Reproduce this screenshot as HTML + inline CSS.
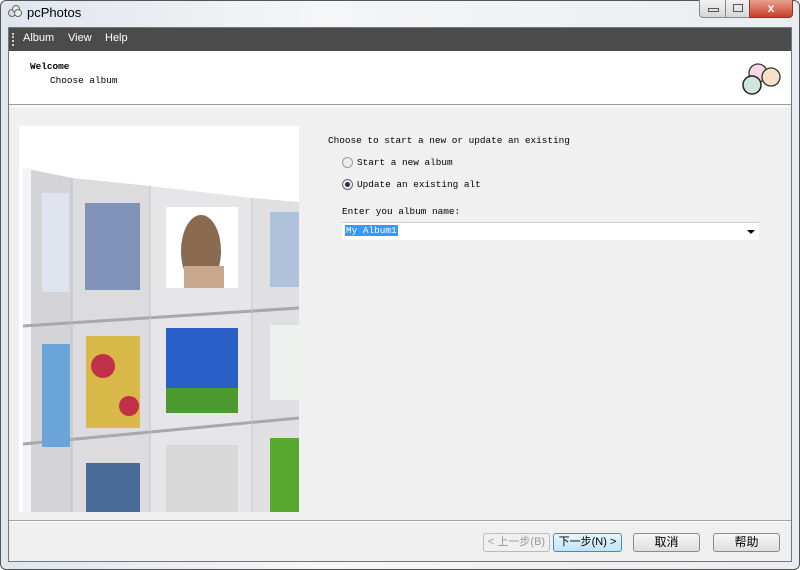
<!DOCTYPE html>
<html><head><meta charset="utf-8"><style>
*{margin:0;padding:0;box-sizing:border-box}
html,body{width:800px;height:570px;overflow:hidden}
body{background:#fff;font-family:"Liberation Sans","Noto Sans CJK SC",sans-serif;position:relative}
.a{position:absolute}
.mono{font-family:"Liberation Mono","Noto Sans CJK SC",monospace;font-size:9.4px;color:#000;white-space:nowrap}
.btn{position:absolute;top:533px;height:19px;border:1px solid #8a8a8a;border-radius:3px;background:linear-gradient(#f6f6f6,#dedede);font-size:12px;text-align:center;line-height:17px;font-family:"Liberation Sans","Noto Sans CJK SC",sans-serif}
</style></head><body>
<div class="a" style="left:0;top:0;width:800px;height:570px;border:1px solid #555;border-radius:6px;background:linear-gradient(90deg,#dfe6ee,#f4f6f8 40%,#e9edf1)"></div>
<div class="a" style="left:8px;top:4px;width:14px;height:14px"><svg width="14" height="14"><circle cx="4" cy="9" r="3.5" fill="#ddd" stroke="#666"/><circle cx="8" cy="5" r="3.5" fill="#eee" stroke="#666"/><circle cx="10" cy="9" r="3.5" fill="#eee" stroke="#666"/></svg></div>
<div class="a" style="left:27px;top:5px;font-size:13px;color:#000">pcPhotos</div>
<div class="a" style="left:699px;top:0;width:27px;height:18px;border:1px solid #888;border-top:0;border-radius:0 0 0 4px;background:linear-gradient(#f2f2f2,#d6d6d6)"><div class="a" style="left:8px;top:8px;width:11px;height:4px;border:1px solid #555"></div></div>
<div class="a" style="left:725px;top:0;width:25px;height:18px;border:1px solid #888;border-top:0;background:linear-gradient(#f2f2f2,#d6d6d6)"><div class="a" style="left:7px;top:4px;width:10px;height:8px;border:1px solid #555"></div></div>
<div class="a" style="left:749px;top:0;width:44px;height:18px;border:1px solid #8a3a2a;border-top:0;border-radius:0 0 4px 0;background:linear-gradient(#e8a090,#c8402a);color:#fff;font-weight:bold;font-size:12px;text-align:center;line-height:16px">x</div>
<div class="a" style="left:8px;top:27px;width:784px;height:535px;background:#f0f0f0;border:1px solid #777"></div>
<div class="a" style="left:9px;top:28px;width:782px;height:23px;background:#4b4b4b"></div>
<div class="a" style="left:12px;top:33px;width:2px;height:13px;border-left:2px dotted #ccc"></div>
<div class="a" style="left:23px;top:32px;font-size:11px;color:#fff">Album</div>
<div class="a" style="left:68px;top:32px;font-size:11px;color:#fff">View</div>
<div class="a" style="left:105px;top:32px;font-size:11px;color:#fff">Help</div>
<div class="a" style="left:9px;top:51px;width:782px;height:54px;background:#fff;border-bottom:1px solid #a0a0a0"></div>
<div class="a mono" style="left:30px;top:61px;font-weight:bold">Welcome</div>
<div class="a mono" style="left:50px;top:75px">Choose album</div>
<svg class="a" style="left:738px;top:58px" width="48" height="42"><circle cx="20" cy="15" r="9" fill="#f6d8e6" stroke="#333" stroke-width="1.3"/><circle cx="33" cy="19" r="9" fill="#f6e0c8" stroke="#333" stroke-width="1.3"/><circle cx="14" cy="27" r="9" fill="#cfe6dc" stroke="#222" stroke-width="1.5"/></svg>
<div class="a" style="left:9px;top:106px;width:782px;height:1px;background:#fff"></div>
<svg class="a" style="left:19px;top:126px" width="280" height="386">
<rect width="280" height="386" fill="#fff"/>
<polygon points="4,42 53,52 53,386 4,386" fill="#d4d4d8"/>
<polygon points="53,52 131,60 131,386 53,386" fill="#dcdcde"/>
<polygon points="131,60 233,72 233,386 131,386" fill="#e6e6e8"/>
<polygon points="233,72 280,76 280,386 233,386" fill="#e0e0e2"/>
<rect x="4" y="42" width="8" height="344" fill="#f4f4f6"/>
<line x1="4" y1="200" x2="280" y2="182" stroke="#a8a8ac" stroke-width="3"/>
<line x1="4" y1="318" x2="280" y2="292" stroke="#a8a8ac" stroke-width="3"/>
<line x1="53" y1="52" x2="53" y2="386" stroke="#bbb"/><line x1="131" y1="60" x2="131" y2="386" stroke="#c4c4c4"/><line x1="233" y1="72" x2="233" y2="386" stroke="#c4c4c4"/>
<rect x="23" y="67" width="27" height="99" fill="#dfe3ee"/>
<rect x="66" y="77" width="55" height="87" fill="#7f92b8"/>
<rect x="147" y="81" width="72" height="81" fill="#fff"/>
<ellipse cx="182" cy="125" rx="20" ry="36" fill="#8a6a50"/><rect x="165" y="140" width="40" height="22" fill="#c9a890"/>
<rect x="251" y="86" width="29" height="75" fill="#aec2dc"/>
<rect x="23" y="218" width="28" height="103" fill="#6aa4d8"/>
<rect x="67" y="210" width="54" height="92" fill="#d8b848"/><circle cx="84" cy="240" r="12" fill="#c03048"/><circle cx="110" cy="280" r="10" fill="#c03048"/>
<rect x="147" y="202" width="72" height="85" fill="#2a5fc8"/><rect x="147" y="262" width="72" height="25" fill="#4a9a30"/>
<rect x="251" y="199" width="29" height="75" fill="#eef2ee"/>
<rect x="67" y="337" width="54" height="49" fill="#4a6a9a"/>
<rect x="147" y="319" width="72" height="67" fill="#d8d8d8"/>
<rect x="251" y="312" width="29" height="74" fill="#58a830"/>
</svg>
<div class="a mono" style="left:328px;top:135px">Choose to start a new or update an existing</div>
<div class="a" style="left:342px;top:157px;width:11px;height:11px;border-radius:50%;border:1px solid #999;background:#eee"></div>
<div class="a mono" style="left:357px;top:157px">Start a new album</div>
<div class="a" style="left:342px;top:179px;width:11px;height:11px;border-radius:50%;border:1px solid #667;background:#eee"><div class="a" style="left:2px;top:2px;width:5px;height:5px;border-radius:50%;background:#234"></div></div>
<div class="a mono" style="left:357px;top:179px">Update an existing alt</div>
<div class="a mono" style="left:342px;top:206px">Enter you album name:</div>
<div class="a" style="left:342px;top:222px;width:417px;height:18px;background:#fff;border-top:1px solid #ccc"></div>
<div class="a mono" style="left:345px;top:225px;background:#3399ff;color:#fff;padding:0 1px">My Album1</div>
<div class="a" style="left:747px;top:230px;width:0;height:0;border-left:4px solid transparent;border-right:4px solid transparent;border-top:4px solid #000"></div>
<div class="a" style="left:9px;top:520px;width:782px;height:1px;background:#a0a0a0"></div>
<div class="a" style="left:9px;top:521px;width:782px;height:1px;background:#fff"></div>
<div class="btn" style="left:483px;width:67px;color:#999;border-color:#bbb;background:#f0f0f0;font-size:11px">&lt; 上一步(B)</div>
<div class="btn" style="left:553px;width:69px;border-color:#3c8fc0;background:linear-gradient(#eaf6fd,#bfe3f6);font-size:11px">下一步(N) &gt;</div>
<div class="btn" style="left:633px;width:67px">取消</div>
<div class="btn" style="left:713px;width:67px">帮助</div>
</body></html>
